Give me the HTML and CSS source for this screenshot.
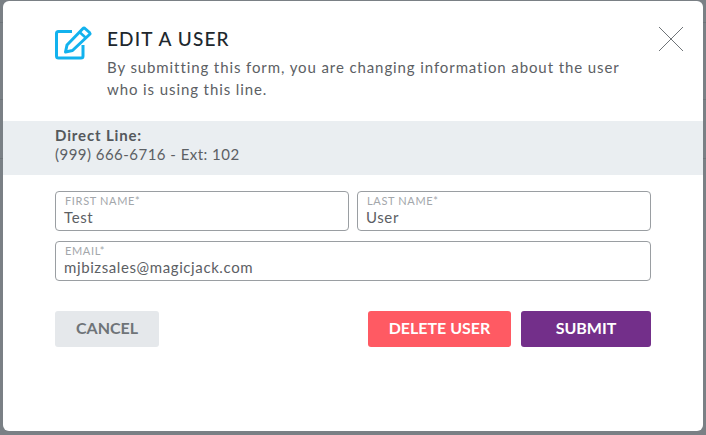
FILE: index.html
```html
<!DOCTYPE html>
<html lang="en">
<head>
<meta charset="utf-8">
<title>Edit a user</title>
<link rel="stylesheet" href="styles.css">
</head>
<body>
<div class="modal">
  <button class="close" aria-label="Close">
    <svg width="26" height="26" viewBox="0 0 26 26"><path d="M1 1L25 25M25 1L1 25" fill="none" stroke="#6f7478" stroke-width="1"/></svg>
  </button>
  <header class="head">
    <svg class="icon" width="38" height="34" viewBox="0 0 38 34">
      <path d="M17 5.500H3.500A2 2 0 0 0 1.500 7.500V30A2 2 0 0 0 3.500 32H26A2 2 0 0 0 28 30V19" fill="none" stroke="#12b2ee" stroke-width="3" stroke-linejoin="round"/>
      <path d="M30 2.500L34.500 6.500A1.500 1.500 0 0 1 34.500 8.500L17.500 24.500L10.500 26L12 19L28 2.500A1.400 1.400 0 0 1 30 2.500Z" fill="none" stroke="#12b2ee" stroke-width="3" stroke-linejoin="round"/>
      <path d="M25 6.500L31 12" fill="none" stroke="#12b2ee" stroke-width="2.500"/>
    </svg>
    <div class="head-text">
      <h1>EDIT A USER</h1>
      <p>By submitting this form, you are changing information about the user<br>who is using this line.</p>
    </div>
  </header>
  <section class="band">
    <strong>Direct Line:</strong>
    <span>(999) 666-6716 - Ext: 102</span>
  </section>
  <form class="form">
    <div class="row">
      <label class="field first"><span class="cap">FIRST NAME*</span><span class="val">Test</span></label>
      <label class="field last"><span class="cap">LAST NAME*</span><span class="val">User</span></label>
    </div>
    <label class="field"><span class="cap">EMAIL*</span><span class="val">mjbizsales@magicjack.com</span></label>
    <div class="actions">
      <button type="button" class="btn cancel">CANCEL</button>
      <button type="button" class="btn delete">DELETE USER</button>
      <button type="button" class="btn submit">SUBMIT</button>
    </div>
  </form>
</div>
</body>
</html>
```
FILE: styles.css
```css
* { box-sizing: border-box; }
html, body { margin: 0; height: 100%; }
body {
  width: 706px;
  height: 435px;
  overflow: hidden;
  background-color: #7a8085;
  background-image:
    linear-gradient(#6e7479, #6e7479),
    linear-gradient(#6e7479, #6e7479),
    linear-gradient(#6e7479, #6e7479);
  background-repeat: no-repeat;
  background-size: 100% 1px;
  background-position: 0 22px, 0 99px, 0 158px;
  padding: 1px 3px 4px;
  font-family: Lato, "Open Sans", sans-serif;
  color: #5c6064;
}
.modal {
  position: relative;
  width: 700px;
  height: 430px;
  background: #fff;
  border-radius: 6px;
}
.close {
  position: absolute;
  top: 25px;
  left: 655px;
  padding: 0;
  border: 0;
  background: none;
  line-height: 0;
}
.head {
  display: flex;
  padding-top: 25px;
  padding-left: 52px;
  height: 120px;
}
.icon { flex: none; margin-right: 14px; }
.head-text { padding-top: 2px; }
h1 {
  margin: 0 0 6px;
  font-size: 19px;
  line-height: 22px;
  font-weight: 500;
  letter-spacing: 1.15px;
  color: #20272d;
}
.head-text p {
  margin: 0;
  font-size: 15px;
  line-height: 22px;
  letter-spacing: 0.9px;
  color: #5c6064;
}
.band {
  display: flex;
  flex-direction: column;
  height: 54px;
  padding: 5px 52px 0;
  background: #eaeef1;
  font-size: 15px;
  line-height: 18px;
}
.band strong { font-weight: 700; letter-spacing: 0.85px; color: #54585c; }
.band span { margin-top: 1px; letter-spacing: 0.47px; }
.form {
  display: flex;
  flex-direction: column;
  gap: 10px;
  padding: 16px 52px 0;
}
.row { display: flex; gap: 8px; }
.field {
  display: flex;
  flex-direction: column;
  height: 40px;
  padding: 2px 8px 0 9px;
  border: 1px solid #9a9ea2;
  border-radius: 4px;
}
.first { width: 294px; }
.last { flex: 1; }
.cap {
  font-size: 11px;
  line-height: 13px;
  letter-spacing: 0.65px;
  color: #a3a7ab;
}
.val {
  margin-top: 1px;
  margin-left: -1px;
  font-size: 15px;
  line-height: 18px;
  letter-spacing: 0.6px;
  color: #5c6064;
}
.actions { display: flex; margin-top: 20px; gap: 10px; }
.btn {
  height: 36px;
  padding: 0 0 4px;
  border: 0;
  border-radius: 3px;
  font-family: inherit;
  font-size: 16px;
  font-weight: 700;
}
.cancel { width: 104px; margin-right: auto; background: #e5e8eb; color: #6f7478; }
.delete { width: 143px; background: #ff5a63; color: #fff; }
.submit { width: 130px; background: #732f8a; color: #fff; }
```
